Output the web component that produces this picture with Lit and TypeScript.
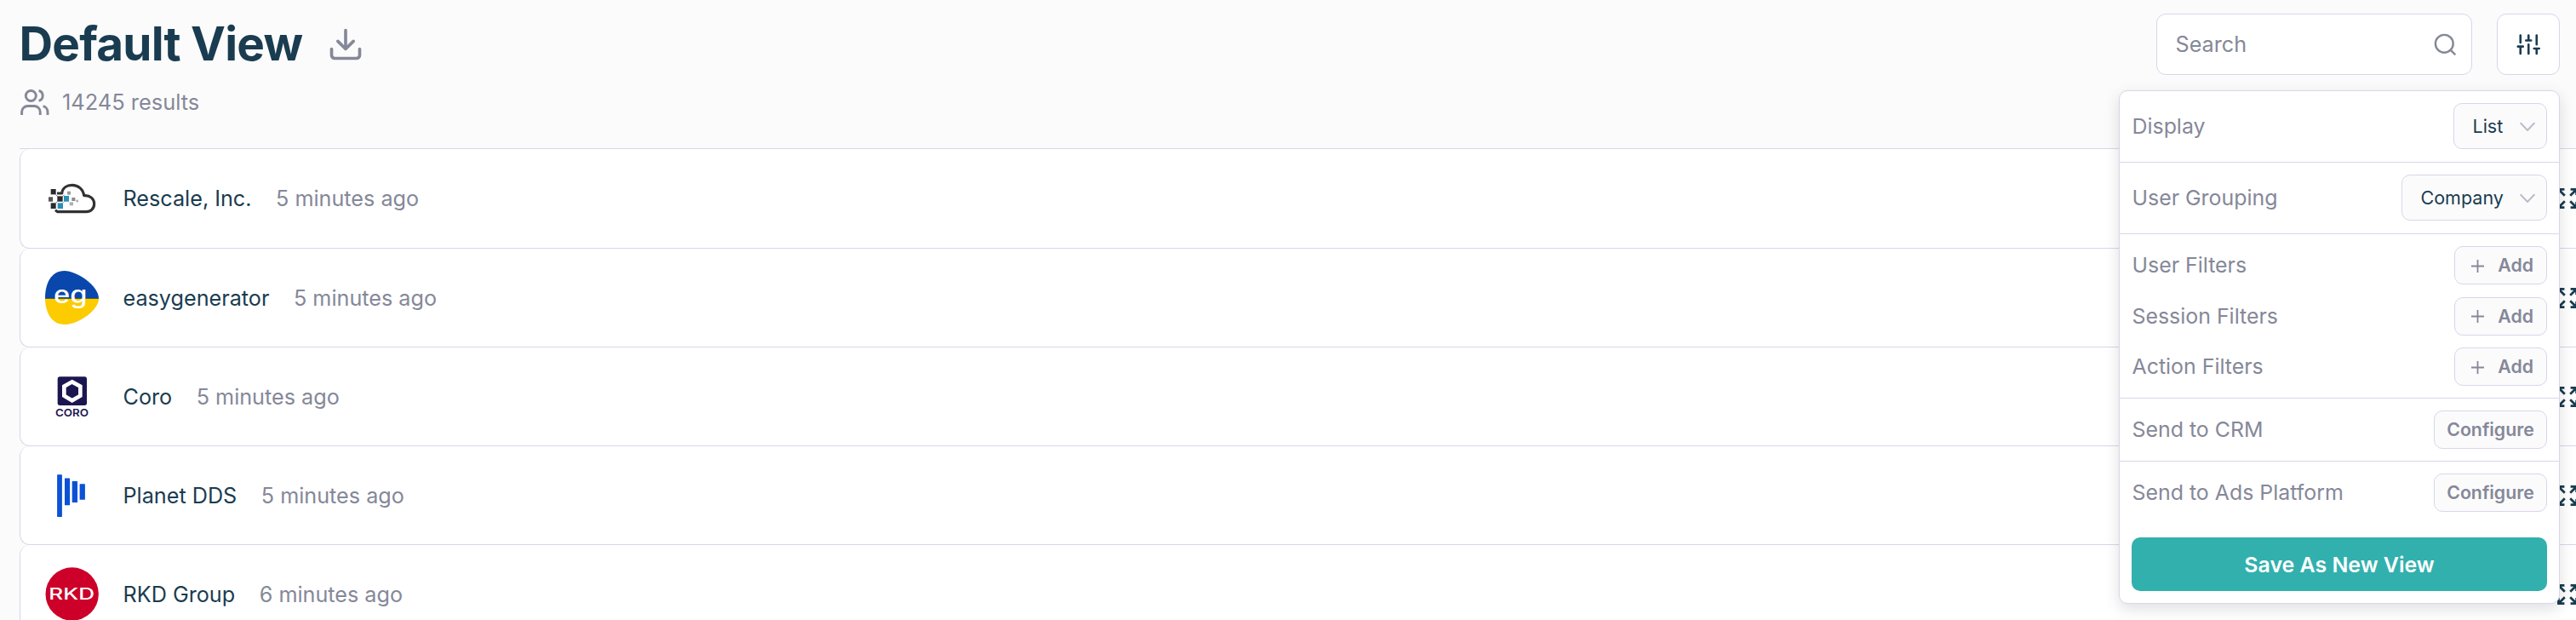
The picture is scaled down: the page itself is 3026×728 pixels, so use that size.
import { LitElement, html, css, svg, TemplateResult } from 'lit';
import { customElement, property } from 'lit/decorators.js';

const logos: Record<string, TemplateResult> = {
  rescale: html`<svg viewBox="39 3 189 189" width="63" height="63">
    <path d="M81 78H98C100 58 116 49 134 49C155 49 173 63 176 86C198 84 212 98 212 115C212 132 200 143 184 143H82L75 137" fill="none" stroke="#333232" stroke-width="9.5" stroke-linejoin="round"/>
    <g fill="#2c2b2b"><rect x="59" y="63" width="18" height="19"/><rect x="82" y="88" width="19" height="19"/><rect x="59" y="112" width="18" height="20"/></g>
    <path d="M76 82l7 7M101 89l6-6M76 113l7-7" stroke="#2c2b2b" stroke-width="2"/>
    <rect x="51" y="91" width="15" height="16" fill="#555"/>
    <g fill="#2a8fb8"><rect x="105" y="87" width="18" height="20"/><rect x="83" y="112" width="19" height="20"/></g>
    <path d="M101 113l6-7" stroke="#2a8fb8" stroke-width="2"/>
    <g fill="#999"><rect x="117" y="71" width="12" height="12"/><rect x="133" y="93" width="12" height="12" fill="#8a8a8a"/><rect x="125" y="109" width="13" height="12" fill="#b0b0b0"/><rect x="148" y="101" width="8" height="8" fill="#b0b0b0"/></g>
  </svg>`,
  easygenerator: html`<svg viewBox="39 24 189 189" width="63" height="63">
    <clipPath id="pebble"><path d="M107 24C150 24 228 76 228 122C228 162 156 213 107 213C58 213 39 164 39 120C39 72 58 24 107 24Z"/></clipPath>
    <g clip-path="url(#pebble)"><path fill="#0a47ac" d="M39 24h189v97H39z"/><path fill="#fccb00" d="M39 121h189v92H39z"/><path fill="#55642f" d="M39 120h189v3H39z"/></g>
    <text x="69" y="138" font-size="84" font-weight="500" fill="#fff" textLength="118" lengthAdjust="spacingAndGlyphs">eg</text>
  </svg>`,
  coro: html`<svg viewBox="39 12 189 189" width="63" height="63">
    <rect x="83" y="37" width="103" height="101" rx="8" fill="#1c1650"/>
    <path d="M134 55L163 71V104L134 121L106 104V71Z" fill="none" stroke="#fff" stroke-width="14"/>
    <text x="75" y="176" font-size="37" font-weight="600" fill="#1c1650" textLength="117" lengthAdjust="spacingAndGlyphs">CORO</text>
  </svg>`,
  planet: html`<svg viewBox="0 0 63 63" width="63" height="63" fill="#0b52d6">
    <rect x="14.1" y="7.3" width="5.8" height="49.6" rx=".6"/><rect x="23" y="11.5" width="6.1" height="31.7" rx=".6"/>
    <rect x="31.7" y="15" width="6.3" height="25" rx=".6"/><rect x="40.6" y="18.2" width="6.3" height="18.6" rx=".6"/>
  </svg>`,
  rkd: html`<svg viewBox="39 18 189 189" width="63" height="63">
    <circle cx="134" cy="112.5" r="93.5" fill="#cc0029"/>
    <text x="52" y="131" font-size="55" font-weight="500" fill="#fff" textLength="161" lengthAdjust="spacingAndGlyphs">RKD</text>
  </svg>`,
};

const glyphs: Record<string, TemplateResult> = {
  download: svg`<path d="M21 15v4a2 2 0 0 1-2 2H5a2 2 0 0 1-2-2v-4M7 10l5 5 5-5M12 15V3"/>`,
  search: svg`<circle cx="11" cy="11" r="8.6"/><path d="M21.2 21.2L17 17"/>`,
  sliders: svg`<path d="M4 21v-7M4 10V3M12 21v-9M12 8V3M20 21v-5M20 12V3M1.5 14h5M9.5 8h5M17.5 16h5"/>`,
};

const icon = (name: string, size: number, width = 2) => html`<svg class="icon" viewBox="0 0 24 24" width=${size} height=${size} stroke-width=${width}>${glyphs[name]}</svg>`;

@customElement('company-row')
class CompanyRow extends LitElement {
  @property() logo = '';
  @property() name = '';
  @property() time = '';

  static styles = css`
    :host { display: flex; align-items: center; height: 116px; box-sizing: border-box; padding-left: 29px;
      background: #fff; border: 1px solid #d8d6eb; border-top-width: 0; border-right: 0; border-radius: 12px 0 0 12px; overflow: hidden; }
    :host(:first-child) { height: 117px; }
    .logo { width: 63px; height: 63px; flex: none; }
    .logo svg { display: block; }
    .name { margin-left: 28.5px; padding-top: .5px; color: #1a3c50; }
    .time { margin-left: 28.5px; padding-top: .5px; color: #858899; }
    .expand { margin-left: auto; margin-right: -1.5px; flex: none; fill: none; stroke: #1a3c50; stroke-width: 2.7; }
  `;

  render() {
    return html`
      <div class="logo">${logos[this.logo]}</div>
      <span class="name">${this.name}</span>
      <span class="time">${this.time}</span>
      <svg class="expand" viewBox="0 0 24 24" width="24" height="24">
        <path d="M1.4 8V1.4H8.4M1.8 1.8L8.8 8.8M22.6 8V1.4H15.6M22.2 1.8L15.2 8.8M1.4 16V22.6H8.4M1.8 22.2L8.8 15.2M22.6 16V22.6H15.6M22.2 22.2L15.2 15.2"/>
      </svg>`;
  }
}

@customElement('view-menu')
class ViewMenu extends LitElement {
  static styles = css`
    :host { display: block; box-sizing: border-box; width: 518px; height: 603px; background: #fff; border: 1px solid #d8d6eb;
      border-radius: 10px; box-shadow: 0 6px 18px rgba(0, 0, 0, .13); }
    .section { display: flex; flex-direction: column; gap: 14.5px; padding: 14px; border-bottom: 1px solid #d8d6eb; }
    .select-section { padding-bottom: 15px; }
    .last { border-bottom: 0; }
    .line { display: flex; align-items: center; justify-content: space-between; }
    .label { font-size: 24.9px; padding: 1px 0 0 .5px; color: #858899; }
    .button, .select { display: flex; align-items: center; box-sizing: border-box; height: 45px; background: #fbfbfc;
      border: 1px solid #d8d6eb; border-radius: 10px; font-size: 21.3px; font-weight: 600; color: #858899; }
    .button { width: 133px; justify-content: center; padding-top: 1px; }
    .select { height: 54px; font-size: 21.5px; font-weight: 400; color: #1a3c50; padding: 1px 13px 0 21.5px; justify-content: space-between; }
    .select.narrow { width: 110px; }
    .select.wide { width: 171px; }
    .button.add { width: 109px; justify-content: space-between; padding-left: 18.5px; padding-right: 15px; }
    svg { display: block; fill: none; stroke: #858899; stroke-width: 1.8; }
    .chevron { stroke: #bcbccb; stroke-width: 2; stroke-linecap: round; stroke-linejoin: round; }
    .save { display: flex; align-items: center; justify-content: center; box-sizing: border-box; height: 63px; margin: 16px 14px 0; padding-top: 2px;
      border-radius: 10px; background: #32b0ae; color: #fff; font-weight: 600; font-size: 24.9px; }
  `;

  private select(label: string, value: string, size: string) {
    return html`<div class="section select-section"><div class="line"><span class="label">${label}</span>
      <div class="select ${size}">${value}<svg class="chevron" width="18" height="12"><path d="M1.2 1.8L9 10L16.8 1.8"/></svg></div></div></div>`;
  }

  private configure(label: string, last = false) {
    return html`<div class="section ${last ? 'last' : ''}"><div class="line"><span class="label">${label}</span>
      <div class="button">Configure</div></div></div>`;
  }

  render() {
    return html`
      ${this.select('Display', 'List', 'narrow')}
      ${this.select('User Grouping', 'Company', 'wide')}
      <div class="section">
        ${['User Filters', 'Session Filters', 'Action Filters'].map(label => html`<div class="line"><span class="label">${label}</span>
          <div class="button add"><svg width="15" height="15"><path d="M7.5 0V15M0 7.5H15"/></svg>Add</div></div>`)}
      </div>
      ${this.configure('Send to CRM')}
      ${this.configure('Send to Ads Platform', true)}
      <div class="save">Save As New View</div>`;
  }
}

@customElement('app-root')
class AppRoot extends LitElement {
  static styles = css`
    :host { display: block; position: relative; height: 728px; overflow: hidden; background: #fbfbfb;
      font: 400 25.2px/1.2 Inter, sans-serif; color: #858899; }
    .header { display: flex; justify-content: space-between; height: 174px; box-sizing: border-box; padding: 16px 19px 0 22.5px; }
    .title { display: flex; align-items: center; height: 72px; gap: 28.5px; }
    h1 { margin: 0; font-size: 54.8px; font-weight: 700; line-height: 70px; padding-bottom: 2px; letter-spacing: -.75px; color: #1a3c50; }
    .icon { display: block; fill: none; stroke: currentColor; stroke-linecap: round; stroke-linejoin: round; flex: none; }
    .results { display: flex; align-items: center; gap: 15px; height: 32px; margin: 16px 0 0 1.5px; font-size: 25.4px; }
    .users { fill: none; stroke: currentColor; stroke-width: 2.9; }
    .tools { display: flex; gap: 29px; height: 72px; }
    .search, .filter { display: flex; align-items: center; box-sizing: border-box; background: #fff; border: 1px solid #d8d6eb; border-radius: 11px; }
    .search { width: 371px; justify-content: space-between; padding: 0 16px 0 21.5px; }
    .filter { width: 74px; justify-content: center; color: #1a3c50; }
    .list { display: block; margin-left: 23px; border-top: 1px solid #d8d6eb; }
    .menu { position: absolute; top: 106px; right: 19px; }
  `;

  render() {
    const rows = [
      ['rescale', 'Rescale, Inc.', '5 minutes ago'],
      ['easygenerator', 'easygenerator', '5 minutes ago'],
      ['coro', 'Coro', '5 minutes ago'],
      ['planet', 'Planet DDS', '5 minutes ago'],
      ['rkd', 'RKD Group', '6 minutes ago'],
    ];
    return html`
      <div class="header">
        <div>
          <div class="title"><h1>Default View</h1>${icon('download', 44)}</div>
          <div class="results">
            <svg class="users" width="34" height="30"><circle cx="12.3" cy="7.5" r="6"/>
              <path d="M1.6 30V26.5A7 7 0 0 1 8.6 19.5H16.2A7 7 0 0 1 23.2 26.5V30M21.6 1.5A6.1 6.1 0 0 1 21.6 13.3M26.6 19.7A7 7 0 0 1 32 26.5V30"/></svg>
            <span>14245 results</span>
          </div>
        </div>
        <div class="tools">
          <div class="search"><span>Search</span>${icon('search', 29, 2)}</div>
          <div class="filter">${icon('sliders', 28.5, 2.2)}</div>
        </div>
      </div>
      <div class="list">${rows.map(([logo, name, time]) => html`<company-row .logo=${logo} .name=${name} .time=${time}></company-row>`)}</div>
      <view-menu class="menu"></view-menu>`;
  }
}
